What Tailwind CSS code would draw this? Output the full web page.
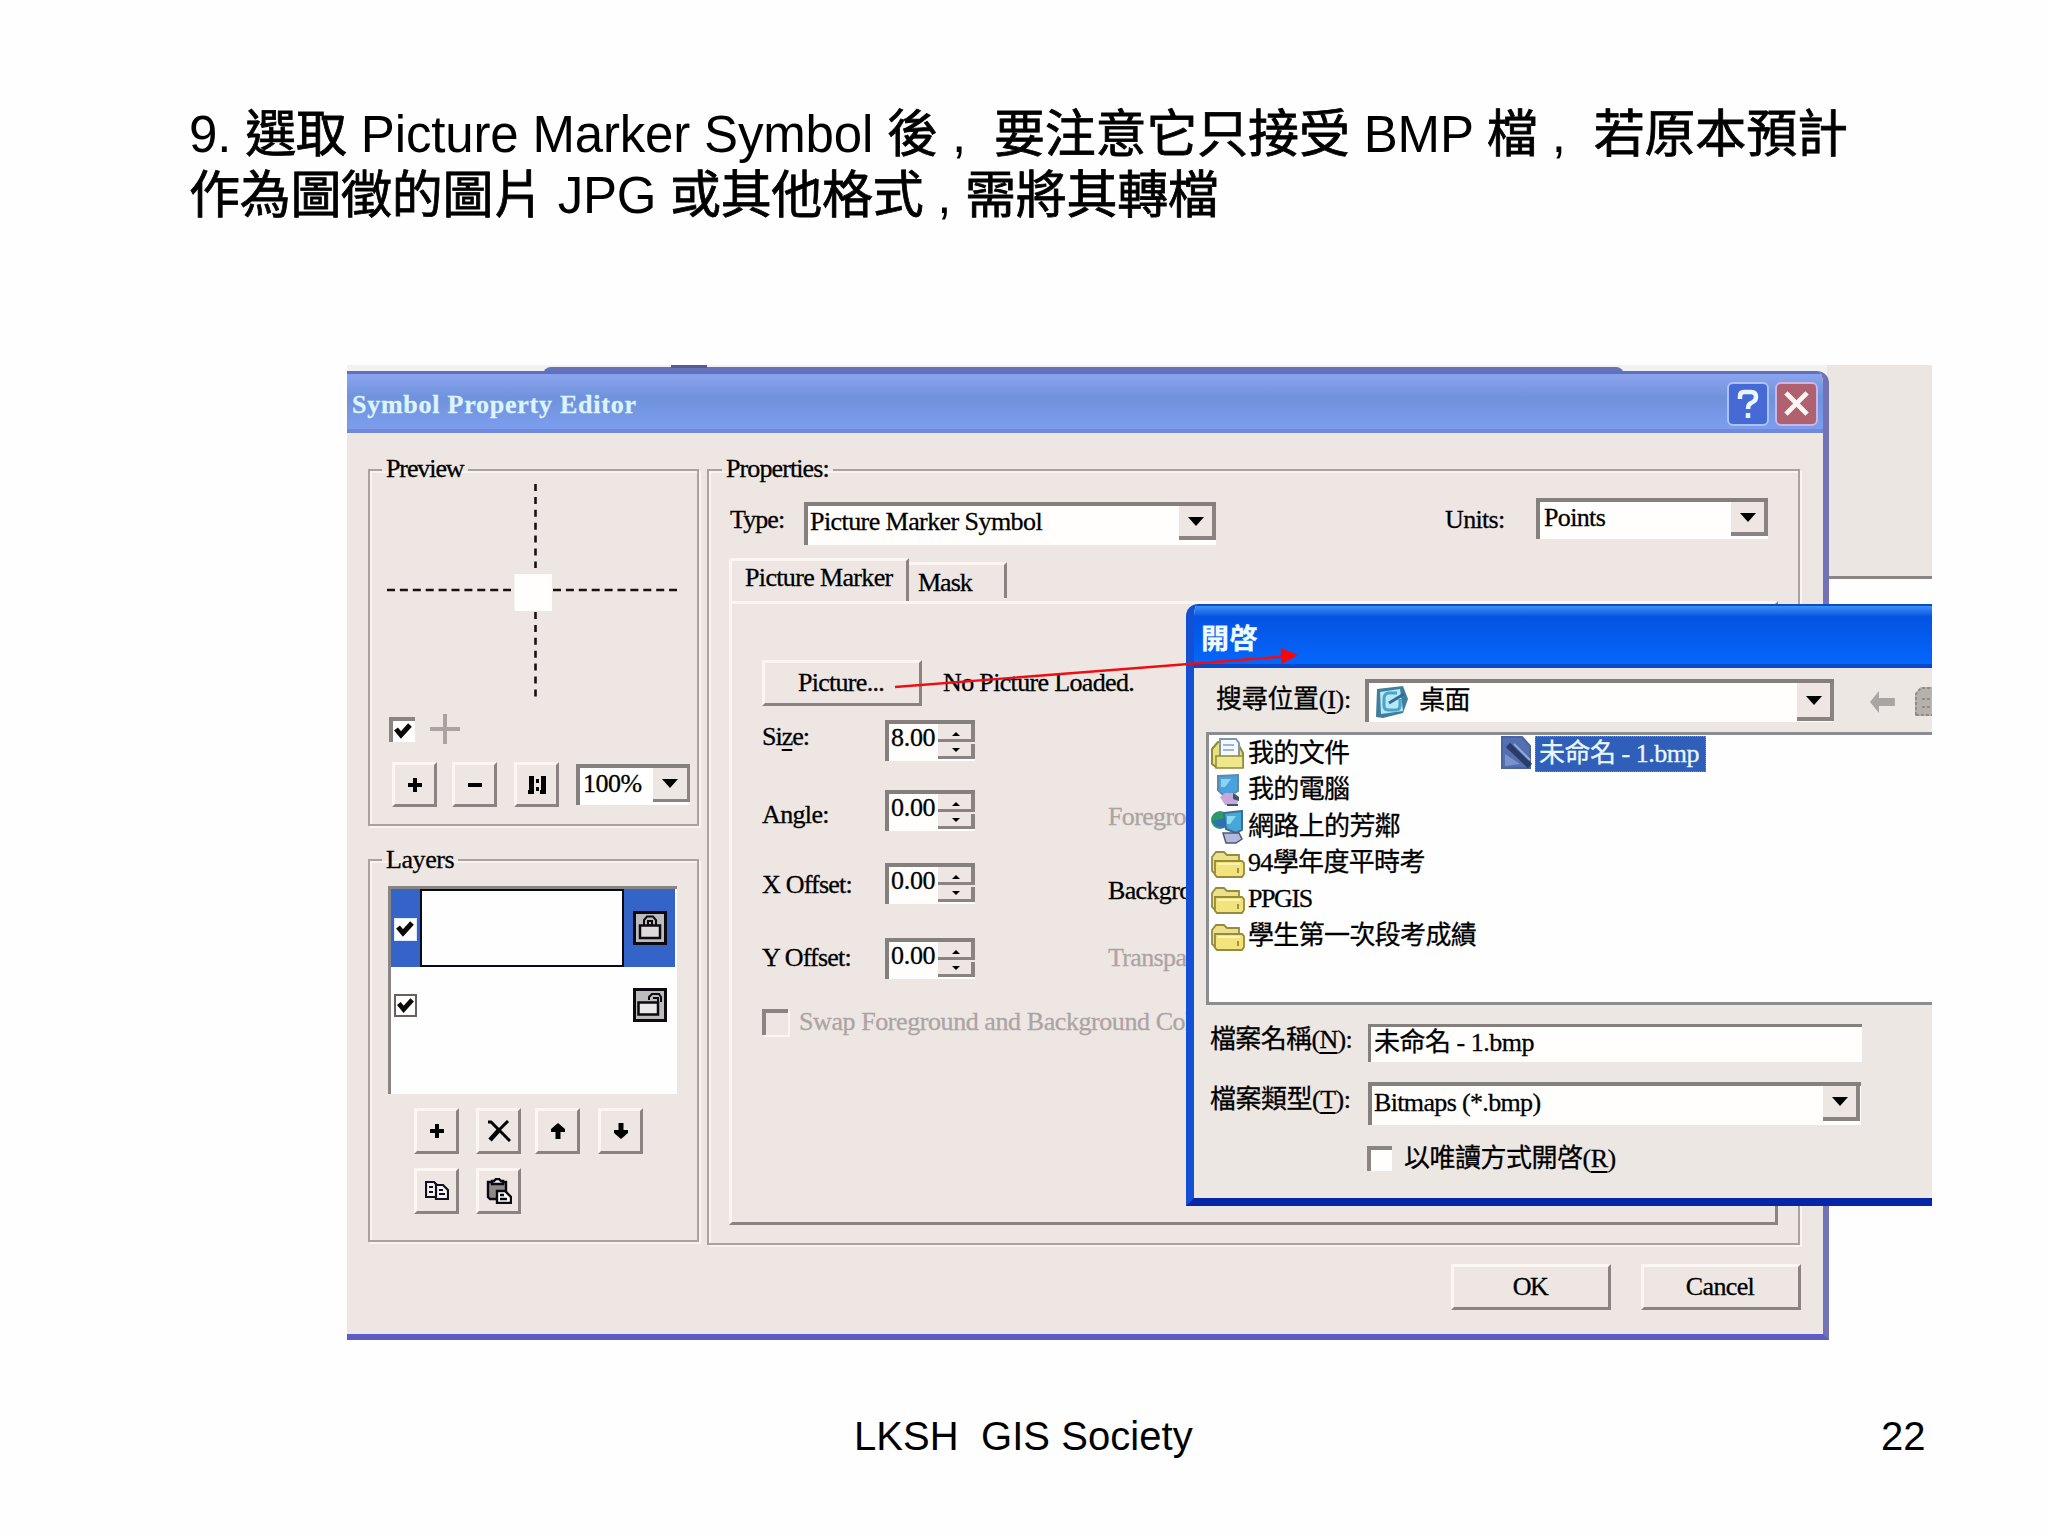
<!doctype html>
<html lang="zh-Hant">
<head>
    <meta charset="UTF-8" />
    <meta name="viewport" content="width=device-width, initial-scale=1.0" />
    <title>LKSH GIS Society - 22</title>
    <script src="https://cdn.jsdelivr.net/npm/@tailwindcss/browser@4"></script>
</head>
<body class="bg-[#fefefe] text-black">
<div class="w-[2048px] h-[1536px] flex flex-col overflow-hidden">

    <!-- Slide heading -->
    <header class="h-[365px] shrink-0 pt-[104px] pl-[189px] font-['Liberation_Sans','Noto_Sans_CJK_TC',sans-serif] text-[51px] leading-[61px] whitespace-nowrap">
        <p class="tracking-[-0.17px]">9. <span class="[-webkit-text-stroke:0.8px]">選取</span> Picture Marker Symbol <span class="[-webkit-text-stroke:0.8px]">後</span> ,&nbsp; <span class="[-webkit-text-stroke:0.8px]">要注意它只接受</span> BMP <span class="[-webkit-text-stroke:0.8px]">檔</span> ,&nbsp; <span class="[-webkit-text-stroke:0.8px]">若原本預計</span></p>
        <p class="tracking-[-0.3px]"><span class="[-webkit-text-stroke:0.8px]">作為圖徵的圖片</span> JPG <span class="[-webkit-text-stroke:0.8px]">或其他格式</span> , <span class="[-webkit-text-stroke:0.8px]">需將其轉檔</span></p>
    </header>

    <!-- Desktop area -->
    <main class="relative shrink-0 ml-[347px] w-[1585px] h-[975px] overflow-hidden font-['Liberation_Serif','Noto_Sans_CJK_TC',serif] text-[26px] leading-[30px] tracking-[-0.65px] whitespace-nowrap [-webkit-text-stroke:0.3px]">

        <!-- Windows behind -->
        <div class="absolute right-0 top-0 w-[110px] h-[214px] bg-[#ece6e2] border-b-[3px] border-[#8c8583]"></div>
        <div class="absolute left-0 top-0 w-[1480px] h-[20px] bg-[#f2f2f0]"></div>
        <div class="absolute left-[196px] top-[2px] w-[1081px] h-[12px] rounded-t-lg bg-[#6472b8]"></div>
        <div class="absolute left-[324px] top-0 w-[36px] h-[3px] bg-[#565a9c]"></div>

        <!-- Symbol Property Editor -->
        <section class="absolute left-0 top-[6px] w-[1482px] h-[969px] flex flex-col bg-[#ede6e3] rounded-tr-[12px] border-r-[6px] border-b-[6px] border-r-[#7272b8] border-b-[#5f5cc8] overflow-hidden">
            <div class="h-[62px] shrink-0 flex items-center pl-[5px] pr-[5px] border-t-[3px] border-[#6070c0] bg-linear-to-b from-[#88a2ec] from-5% via-[#7092dc] via-40% to-[#7d9ff0] shadow-[inset_0_-4px_0_#7487d8]">
                <h2 class="grow font-bold text-[#dcf4fb] tracking-[0.75px] pt-[3px]">Symbol Property Editor</h2>
                <div class="w-[42px] h-[44px] mr-[6px] rounded-md border-2 border-[#a9c4fa] bg-[#4669d6] flex items-center justify-center">
                    <svg class="w-[24px] h-[30px]" viewBox="0 0 24 30" fill="none" stroke="#e8f6ff" stroke-width="4.5"><path d="M4 10V7Q4 3 8 3H15Q20 3 20 8Q20 12 15 14Q12 15.500 12 20"/><path d="M12 24V29"/></svg>
                </div>
                <div class="w-[43px] h-[44px] rounded-md border-2 border-[#c9b6e6] bg-[#b0616f] flex items-center justify-center">
                    <svg class="w-[25px] h-[25px]" viewBox="0 0 26 26" stroke="#fff5f5" stroke-width="5"><path d="M2 2L24 24M24 2L2 24"/></svg>
                </div>
            </div>

            <div class="flex h-[812px] shrink-0 pl-[21px] pt-[23px]">
                <!-- Left column -->
                <div class="w-[331px] mr-[8px] flex flex-col">
                    <fieldset class="h-[370px] border-2 border-[#aaa29f] shadow-[2px_2px_0_#f9f4f0,inset_2px_2px_0_#f9f4f0]">
                        <legend class="ml-[12px] px-[4px] pt-px pb-[3px] leading-[24px] tracking-[-1.1px]">Preview</legend>
                        <svg class="block w-[327px] h-[224px]" viewBox="370 484 327 224" fill="none" stroke="#1c1012" stroke-width="2.600">
                            <path stroke-dasharray="7 5.900" d="M535.500 484V568M535.500 612V698"/>
                            <path stroke-dasharray="8 4.900" d="M387 590H511M553 590H677"/>
                            <path fill="#fffefd" stroke="none" d="M514.500 574H552V611H514.500z"/>
                        </svg>
                        <div class="flex items-center h-[42px] pl-[19px]">
                            <div class="w-[26px] h-[25px] mr-[15px] bg-white border-t-4 border-l-4 border-[#8a8583]">
                                <svg class="w-[20px] h-[20px]" viewBox="0 0 20 20" fill="none" stroke="#0c0808" stroke-width="5"><path d="M3 8L8 14L17 4"/></svg>
                            </div>
                            <svg class="w-[30px] h-[30px]" viewBox="0 0 30 30" stroke="#aaa3a2" stroke-width="4"><path d="M15 0V30M0 15H30"/></svg>
                        </div>
                        <div class="flex pt-[12px] pl-[22px]">
                            <button class="w-[45px] h-[45px] mr-[15px] flex items-center justify-center border-3 border-t-[#fcf6f3] border-l-[#fcf6f3] border-r-[#8a8381] border-b-[#8a8381]">
                                <svg class="w-[14px] h-[14px]" viewBox="0 0 14 14" stroke="#000" stroke-width="4"><path d="M7 0V14M0 7H14"/></svg>
                            </button>
                            <button class="w-[45px] h-[45px] mr-[17px] flex items-center justify-center border-3 border-t-[#fcf6f3] border-l-[#fcf6f3] border-r-[#8a8381] border-b-[#8a8381]">
                                <svg class="w-[14px] h-[14px]" viewBox="0 0 14 14" stroke="#000" stroke-width="4"><path d="M0 7H14"/></svg>
                            </button>
                            <button class="w-[45px] h-[45px] mr-[17px] flex items-center justify-center border-3 border-t-[#fcf6f3] border-l-[#fcf6f3] border-r-[#8a8381] border-b-[#8a8381]">
                                <svg class="w-[20px] h-[18px]" viewBox="0 0 20 18" fill="#000"><path d="M2 0H7V18H1V14H2zM9 3H12V7H9zM9 11H12V15H9zM14 0H19V18H13V14H14z"/></svg>
                            </button>
                            <div class="w-[114px] h-[41px] mt-[2px] flex bg-white border-t-4 border-l-4 border-[#85807d]">
                                <span class="w-[73px] pl-[3px] pt-px tracking-[-0.5px]">100%</span>
                                <div class="w-[37px] h-[34px] flex items-center justify-center bg-[#ede6e3] border-r-3 border-b-3 border-[#8a8381]"><svg class="w-[16px] h-[9px]" viewBox="0 0 16 9"><path d="M0 0H16L8 9z"/></svg></div>
                            </div>
                        </div>
                    </fieldset>

                    <fieldset class="h-[396px] mt-[20px] border-2 border-[#aaa29f] shadow-[2px_2px_0_#f9f4f0,inset_2px_2px_0_#f9f4f0]">
                        <legend class="ml-[12px] px-[4px] pt-[2px] pb-[2px] leading-[24px] tracking-[-0.4px]">Layers</legend>
                        <div class="w-[289px] h-[208px] ml-[18px] mt-[12px] bg-[#fffefe] border-t-3 border-l-3 border-t-[#8a8583] border-l-[#8a8583]">
                            <div class="flex items-center w-[284px] h-[78px] bg-[#3464c8]">
                                <div class="w-[23px] h-[23px] ml-[3px] mr-[3px] mt-[3px] bg-white border border-[#dce8ff]">
                                    <svg class="w-[20px] h-[20px]" viewBox="0 0 20 20" fill="none" stroke="#0c0808" stroke-width="5"><path d="M3 8L8 14L17 4"/></svg>
                                </div>
                                <div class="w-[204px] h-[78px] bg-[#fffefe] border-2 border-[#0a0a12]"></div>
                                <svg class="w-[34px] h-[34px] ml-[9px]" viewBox="0 0 34 34" fill="none" stroke="#0c0a0e" stroke-width="2.500"><path fill="#bdbbbd" stroke-width="3" d="M1.500 1.500H32.500V32.500H1.500z"/><path fill="#dddbdb" d="M7 14.500H27V27H7z"/><path d="M11 14V9L14 5.500H20L23 9V14M15 10H19V14H15z" stroke-width="2"/></svg>
                            </div>
                            <div class="flex items-center w-[284px] h-[76px]">
                                <div class="w-[23px] h-[23px] ml-[3px] bg-white border-2 border-[#68605f]">
                                    <svg class="w-[19px] h-[19px]" viewBox="0 0 20 20" fill="none" stroke="#0c0808" stroke-width="5"><path d="M3 8L8 14L17 4"/></svg>
                                </div>
                                <svg class="w-[34px] h-[34px] ml-[216px]" viewBox="0 0 34 34" fill="none" stroke="#0c0a0e" stroke-width="2.500"><path fill="#bdbbbd" stroke-width="3" d="M1.500 1.500H32.500V32.500H1.500z"/><path fill="#eae8e8" d="M5.500 14.500H25V26.500H5.500z"/><path d="M16 12V9L19 6H26L28 9V14M20 10H25V14" stroke-width="2"/></svg>
                            </div>
                        </div>
                        <div class="grid grid-cols-[62px_59px_63px_60px] grid-rows-[60px_46px] pl-[44px] pt-[14px]">
                            <button class="w-[45px] h-[46px] flex items-center justify-center border-3 border-t-[#fcf6f3] border-l-[#fcf6f3] border-r-[#8a8381] border-b-[#8a8381]">
                                <svg class="w-[14px] h-[14px]" viewBox="0 0 14 14" stroke="#000" stroke-width="4"><path d="M7 0V14M0 7H14"/></svg>
                            </button>
                            <button class="w-[45px] h-[46px] flex items-center justify-center border-3 border-t-[#fcf6f3] border-l-[#fcf6f3] border-r-[#8a8381] border-b-[#8a8381]">
                                <svg class="w-[24px] h-[22px]" viewBox="0 0 24 22" fill="none" stroke="#000"><path stroke-width="3" d="M1 2H4L20 18L23 21"/><path stroke-width="3" d="M21 1L12 10"/><path stroke-width="4.500" d="M12 10L3 20"/></svg>
                            </button>
                            <button class="w-[45px] h-[46px] flex items-center justify-center border-3 border-t-[#fcf6f3] border-l-[#fcf6f3] border-r-[#8a8381] border-b-[#8a8381]">
                                <svg class="w-[14px] h-[16px]" viewBox="0 0 14 16"><path d="M7 0L14 6V9H9.500V16H4.500V9H0V6z"/></svg>
                            </button>
                            <button class="w-[45px] h-[46px] flex items-center justify-center border-3 border-t-[#fcf6f3] border-l-[#fcf6f3] border-r-[#8a8381] border-b-[#8a8381]">
                                <svg class="w-[14px] h-[16px]" viewBox="0 0 14 16"><path d="M7 16L14 10V7H9.500V0H4.500V7H0V10z"/></svg>
                            </button>
                            <button class="w-[45px] h-[46px] flex items-center justify-center border-3 border-t-[#fcf6f3] border-l-[#fcf6f3] border-r-[#8a8381] border-b-[#8a8381]">
                                <svg class="w-[24px] h-[20px]" viewBox="0 0 24 20" fill="#f6f2fa" stroke="#12101c" stroke-width="2.200"><path d="M1 1H9L12 4V16H1z"/><path d="M4 6H8M4 11H8"/><path d="M11 4H18L23 9V18H11z"/><path d="M14 9H18M14 13H20"/></svg>
                            </button>
                            <button class="w-[45px] h-[46px] flex items-center justify-center border-3 border-t-[#fcf6f3] border-l-[#fcf6f3] border-r-[#8a8381] border-b-[#8a8381]">
                                <svg class="w-[26px] h-[26px]" viewBox="0 0 26 26" fill="#8f8a88" stroke="#0c0a10" stroke-width="2.400"><path d="M2 4H20V21H4L2 19z"/><path fill="#f4f0ee" d="M6 6V3H8L10 1H13L15 3H17V6z"/><path fill="#fff" d="M11 13H19L25 19V25H11z"/><path d="M14 17H18M14 21H21"/></svg>
                            </button>
                        </div>
                    </fieldset>
                </div>

                <!-- Right column -->
                <fieldset class="w-[1093px] h-[789px] border-2 border-[#aaa29f] shadow-[2px_2px_0_#f9f4f0,inset_2px_2px_0_#f9f4f0]">
                    <legend class="ml-[13px] px-[4px] pt-px pb-[3px] leading-[24px] tracking-[-0.9px]">Properties:</legend>
                    <div class="flex items-start h-[74px] pl-[21px]">
                        <label class="w-[74px] pt-[21px] tracking-[-0.9px]">Type:</label>
                        <div class="w-[412px] h-[43px] mt-[18px] mr-[229px] flex bg-[#fffefc] border-t-4 border-l-4 border-[#85807d]">
                            <span class="w-[371px] pl-[2px] pt-[1px] tracking-[-0.57px]">Picture Marker Symbol</span>
                            <div class="w-[37px] h-[34px] flex items-center justify-center bg-[#ede6e3] border-r-4 border-b-4 border-[#8a8381]"><svg class="w-[16px] h-[9px]" viewBox="0 0 16 9"><path d="M0 0H16L8 9z"/></svg></div>
                        </div>
                        <label class="w-[91px] pt-[21px]">Units:</label>
                        <div class="w-[232px] h-[41px] mt-[14px] flex bg-[#fffefc] border-t-4 border-l-4 border-[#85807d]">
                            <span class="w-[191px] pl-[4px] pt-px">Points</span>
                            <div class="w-[37px] h-[34px] flex items-center justify-center bg-[#ede6e3] border-r-4 border-b-4 border-[#8a8381]"><svg class="w-[16px] h-[9px]" viewBox="0 0 16 9"><path d="M0 0H16L8 9z"/></svg></div>
                        </div>
                    </div>

                    <!-- Tabs -->
                    <div class="flex h-[43px] pl-[20px]">
                        <div class="w-[180px] pl-[13px] pt-[2px] border-t-3 border-l-3 border-r-3 border-t-[#fcf6f3] border-l-[#fcf6f3] border-r-[#8a8381] rounded-tl">Picture Marker</div>
                        <div class="w-[98px] h-[36px] mt-[4px] pl-[9px] pt-[3px] border-t-3 border-r-3 border-t-[#fcf6f3] border-r-[#8a8381] tracking-[-1px]">Mask</div>
                    </div>
                    <div class="w-[1049px] h-[624px] ml-[20px] pl-[30px] pt-[56px] border-3 border-t-[#fcf6f3] border-l-[#fcf6f3] border-r-[#8a8381] border-b-[#8a8381]">
                        <div class="flex items-center h-[46px] mb-[14px]">
                            <button class="w-[160px] h-[46px] mr-[21px] pr-[2px] border-3 border-t-[#fcf6f3] border-l-[#fcf6f3] border-r-[#8a8381] border-b-[#8a8381] leading-[30px] tracking-[-0.7px]">Picture...</button>
                            <span>No Picture Loaded.</span>
                        </div>
                        <div class="flex items-start h-[70px]">
                            <label class="w-[123px] mt-[2px] tracking-[-1px]">Si<span class="underline underline-offset-4">z</span>e:</label>
                            <div class="w-[90px] h-[41px] flex bg-[#fffefc] border-t-4 border-l-4 border-[#85807d]">
                                <span class="w-[49px] pl-[2px] -mt-px tracking-[-0.3px]">8.00</span>
                                <svg class="w-[37px] h-[35px]" viewBox="0 0 37 35"><path fill="#ede6e3" d="M0 0H37V35H0z"/><path fill="#8a8381" d="M0 15H37V18H0zM0 32H37V35H0zM33 0H37V16H33zM33 20H37V35H33z"/><path d="M18 8L22 12H14zM18 28L22 24H14z"/></svg>
                            </div>
                        </div>
                        <div class="flex items-start h-[73px]">
                            <label class="w-[123px] mt-[10px]">Angle:</label>
                            <div class="w-[90px] h-[41px] mr-[133px] flex bg-[#fffefc] border-t-4 border-l-4 border-[#85807d]">
                                <span class="w-[49px] pl-[2px] -mt-px tracking-[-0.3px]">0.00</span>
                                <svg class="w-[37px] h-[35px]" viewBox="0 0 37 35"><path fill="#ede6e3" d="M0 0H37V35H0z"/><path fill="#8a8381" d="M0 15H37V18H0zM0 32H37V35H0zM33 0H37V16H33zM33 20H37V35H33z"/><path d="M18 8L22 12H14zM18 28L22 24H14z"/></svg>
                            </div>
                            <span class="mt-[12px] text-[#aca4a3]">Foreground Color:</span>
                        </div>
                        <div class="flex items-start h-[75px]">
                            <label class="w-[123px] mt-[7px] tracking-[-0.8px]">X Offset:</label>
                            <div class="w-[90px] h-[41px] mr-[133px] flex bg-[#fffefc] border-t-4 border-l-4 border-[#85807d]">
                                <span class="w-[49px] pl-[2px] -mt-px tracking-[-0.3px]">0.00</span>
                                <svg class="w-[37px] h-[35px]" viewBox="0 0 37 35"><path fill="#ede6e3" d="M0 0H37V35H0z"/><path fill="#8a8381" d="M0 15H37V18H0zM0 32H37V35H0zM33 0H37V16H33zM33 20H37V35H33z"/><path d="M18 8L22 12H14zM18 28L22 24H14z"/></svg>
                            </div>
                            <span class="mt-[13px]">Background Color:</span>
                        </div>
                        <div class="flex items-start h-[69px]">
                            <label class="w-[123px] mt-[5px] tracking-[-0.8px]">Y Offset:</label>
                            <div class="w-[90px] h-[41px] mr-[133px] flex bg-[#fffefc] border-t-4 border-l-4 border-[#85807d]">
                                <span class="w-[49px] pl-[2px] -mt-px tracking-[-0.3px]">0.00</span>
                                <svg class="w-[37px] h-[35px]" viewBox="0 0 37 35"><path fill="#ede6e3" d="M0 0H37V35H0z"/><path fill="#8a8381" d="M0 15H37V18H0zM0 32H37V35H0zM33 0H37V16H33zM33 20H37V35H33z"/><path d="M18 8L22 12H14zM18 28L22 24H14z"/></svg>
                            </div>
                            <span class="mt-[5px] text-[#aca4a3]">Transparent Color:</span>
                        </div>
                        <div class="flex items-center h-[30px] text-[#aca4a3]">
                            <div class="w-[26px] h-[26px] mr-[11px] border-t-4 border-l-4 border-[#8a8583] shadow-[2px_2px_0_#fbf6f3]"></div>
                            <span class="tracking-[-0.42px]">Swap Foreground and Background Colors</span>
                        </div>
                    </div>
                </fieldset>
            </div>

            <!-- Dialog buttons -->
            <div class="flex justify-end gap-[30px] pt-[19px] pr-[22px]">
                <button class="w-[160px] h-[46px] pr-[2px] border-3 border-t-[#fcf6f3] border-l-[#fcf6f3] border-r-[#8a8381] border-b-[#8a8381] tracking-[-1.5px]">OK</button>
                <button class="w-[160px] h-[46px] pr-[2px] border-3 border-t-[#fcf6f3] border-l-[#fcf6f3] border-r-[#8a8381] border-b-[#8a8381]">Cancel</button>
            </div>
        </section>

        <!-- Open file dialog -->
        <section class="absolute left-[839px] top-[239px] w-[746px] h-[602px] flex flex-col bg-[#ede7e3] rounded-tl-[12px] border-l-[8px] border-b-[8px] border-l-[#1450d4] border-b-[#0626a8] overflow-hidden">
            <div class="h-[64px] shrink-0 -ml-[8px] pl-[15px] pt-[21px] bg-linear-to-b from-[#3f8ff8] from-3% via-[#0553e2] via-20% to-[#0466fb] to-90% shadow-[inset_0_-4px_0_#0848cc,inset_0_2px_0_#0a4fc0]">
                <h2 class="font-bold text-[#f0fbff] text-[28px] tracking-[0.5px]">開啓</h2>
            </div>
            <div class="flex items-start h-[64px] shrink-0 pl-[22px] pt-[11px]">
                <label class="w-[150px] mt-[6px] tracking-[-0.3px]">搜尋位置(<span class="underline underline-offset-4">I</span>):</label>
                <div class="w-[469px] h-[43px] flex bg-[#fffefc] border-t-4 border-l-4 border-[#85807d]">
                    <svg class="w-[34px] h-[34px] ml-[6px] mt-[2px]" viewBox="0 0 34 34"><path fill="#3f7f9c" d="M2 4L28 1L33 14L28 28L8 33L1 32z"/><path fill="#b8e6f4" d="M5 7L25 4L28 26L6 29z"/><path fill="none" stroke="#4aa3c8" stroke-width="3" d="M22 8H13Q9 9 9 14V21Q9 25 14 25H21Q25 25 25 20V14"/><path stroke="#2e6d96" stroke-width="3" d="M14 18L29 9" /></svg>
                    <span class="w-[388px] pl-[10px] pt-[3px]">桌面</span>
                    <div class="w-[37px] h-[38px] flex items-center justify-center bg-[#ede6e3] border-r-4 border-b-4 border-[#8a8381]"><svg class="w-[16px] h-[9px]" viewBox="0 0 16 9"><path d="M0 0H16L8 9z"/></svg></div>
                </div>
                <svg class="w-[27px] h-[24px] ml-[36px] mt-[11px]" viewBox="0 0 27 24" fill="#a9a5a3"><path d="M0 12L9 1V8H25V16H9V23z"/></svg>
                <svg class="w-[17px] h-[30px] ml-[18px] mt-[8px]" viewBox="0 0 17 30"><path fill="#b5b1ad" d="M0 6L6 0H17V29H0z"/><path fill="none" stroke="#8f8c89" stroke-width="2" stroke-dasharray="3 2" d="M1 28V7L6 1H17M7 12H17M7 20H17M1 28H17"/></svg>
            </div>

            <!-- File list -->
            <div class="h-[273px] shrink-0 ml-[12px] pl-[2px] flex bg-[#fffefe] border-t-3 border-l-3 border-b-3 border-[#8b8d90]">
                <ul class="w-[289px] pt-px">
                    <li class="flex items-center h-[36.300px]"><svg class="w-[34px] h-[34px] mr-[3px]" viewBox="0 0 34 34"><path fill="#e8e07c" stroke="#8f8a34" stroke-width="2" d="M1 12L7 5H26L32 16V30H5L1 27z"/><path fill="#f4faff" stroke="#7f96b4" stroke-width="2" d="M9 18V2H25L28 6V20H9z"/><path stroke="#9fb6d0" stroke-width="2" d="M12 8H23M12 13H23"/><path fill="#efe78c" stroke="#8f8a34" stroke-width="1.500" d="M5 19H32V31H5z"/></svg>我的文件</li>
                    <li class="flex items-center h-[36.300px]"><svg class="w-[34px] h-[34px] mr-[3px]" viewBox="0 0 34 34"><path fill="#4aa2dc" stroke="#5f88ac" stroke-width="2" d="M7 3L27 2V18L20 22H12L7 17z"/><path fill="#8ed2f4" d="M10 6H20L14 14H10z"/><path fill="#c6a8dc" d="M9 24L14 20H24L28 25L26 32H14z"/><path fill="#3f5468" d="M22 20L28 24V28L22 26zM16 31H27V33H16z"/></svg>我的電腦</li>
                    <li class="flex items-center h-[36.300px]"><svg class="w-[34px] h-[34px] mr-[3px]" viewBox="0 0 34 34"><circle cx="9" cy="10" r="9" fill="#2c9a68"/><path fill="#2d70b8" d="M1 11Q7 20 16 17L14 8z"/><path fill="#46a8d8" stroke="#3f6d94" stroke-width="2" d="M13 3L31 1V20L25 23L15 19z"/><path fill="#8ed8f2" d="M16 6H25L19 14H16z"/><path fill="#b4bade" stroke="#4d5878" stroke-width="1.500" d="M12 23H28L31 29L25 33H15z"/></svg>網路上的芳鄰</li>
                    <li class="flex items-center h-[36.300px]"><svg class="w-[34px] h-[34px] mr-[3px]" viewBox="0 0 34 34" stroke="#968a3c" stroke-width="1.800"><path fill="#ece08a" d="M1 11L5 6H13L16 9H28V28H4L1 25z"/><path fill="#f3e37c" d="M4 15H31L33 17V28L31 31H6L4 29z"/><path stroke="#fff6b8" d="M7 18H29"/><path d="M27 22V27"/></svg>94學年度平時考</li>
                    <li class="flex items-center h-[36.300px]"><svg class="w-[34px] h-[34px] mr-[3px]" viewBox="0 0 34 34" stroke="#968a3c" stroke-width="1.800"><path fill="#ece08a" d="M1 11L5 6H13L16 9H28V28H4L1 25z"/><path fill="#f3e37c" d="M4 15H31L33 17V28L31 31H6L4 29z"/><path stroke="#fff6b8" d="M7 18H29"/><path d="M27 22V27"/></svg><span class="tracking-[-1.4px]">PPGIS</span></li>
                    <li class="flex items-center h-[36.300px]"><svg class="w-[34px] h-[34px] mr-[3px]" viewBox="0 0 34 34" stroke="#968a3c" stroke-width="1.800"><path fill="#ece08a" d="M1 11L5 6H13L16 9H28V28H4L1 25z"/><path fill="#f3e37c" d="M4 15H31L33 17V28L31 31H6L4 29z"/><path stroke="#fff6b8" d="M7 18H29"/><path d="M27 22V27"/></svg>學生第一次段考成績</li>
                </ul>
                <div class="flex h-[36px] pt-px">
                    <svg class="w-[34px] h-[34px] mr-px" viewBox="0 0 34 34"><path fill="#5470b0" stroke="#4a64a4" stroke-width="2" d="M2 1H22L30 10V32H2z"/><path fill="#7d92c8" d="M5 18L20 28L5 30z"/><path stroke="#2a3c68" stroke-width="6" d="M8 9L30 30"/><path stroke="#8ca8dc" stroke-width="2" d="M14 8L30 24"/></svg>
                    <span class="w-[171px] h-[36px] pl-[4px] leading-[35px] tracking-[-0.5px] bg-[#2f5fb8] text-[#eaf6ff] outline outline-dotted outline-[#6f8fd0] -outline-offset-1">未命名 - 1.bmp</span>
                </div>
            </div>

            <div class="flex items-start h-[57px] shrink-0 pl-[16px] pt-[19px]">
                <label class="w-[158px] mt-px">檔案名稱(<span class="underline underline-offset-4">N</span>):</label>
                <div class="w-[494px] h-[38px] pl-[3px] pt-px bg-[#fffefc] border-t-3 border-l-3 border-[#85807d] tracking-[-0.5px]">未命名 - 1.bmp</div>
            </div>
            <div class="flex items-start h-[60px] shrink-0 pl-[16px] pt-[20px]">
                <label class="w-[158px] mt-[3px] tracking-[-0.5px]">檔案類型(<span class="underline underline-offset-4">T</span>):</label>
                <div class="w-[493px] h-[43px] flex bg-[#fffefc] border-t-4 border-l-4 border-[#85807d]">
                    <span class="w-[451px] pl-[2px] pt-[2px]">Bitmaps (*.bmp)</span>
                    <div class="w-[37px] h-[35px] flex items-center justify-center bg-[#ede6e3] border-r-4 border-b-4 border-[#8a8381]"><svg class="w-[16px] h-[9px]" viewBox="0 0 16 9"><path d="M0 0H16L8 9z"/></svg></div>
                </div>
            </div>
            <div class="flex items-start pt-[22px] pl-[173px]">
                <div class="w-[25px] h-[25px] mt-[2px] mr-[12px] bg-[#fffefc] border-t-4 border-l-4 border-[#8a8583]"></div>
                <span class="tracking-[-0.5px]">以唯讀方式開啓(<span class="underline underline-offset-4">R</span>)</span>
            </div>
        </section>

        <!-- Pointer from the button to the dialog -->
        <svg class="absolute left-[540px] top-[280px] w-[420px] h-[50px]" viewBox="887 645 420 50">
            <path stroke="#f00d10" stroke-width="2.400" d="M895 687L1284 656.500"/>
            <path fill="#fa0505" d="M1298 655L1280.500 648L1281.700 664z"/>
        </svg>
    </main>

    <!-- Slide footer -->
    <footer class="flex pt-[73px] pl-[854px] font-['Liberation_Sans',sans-serif] text-[40px] leading-[46px]">
        <span class="w-[1027px] tracking-[0.05px]">LKSH&nbsp; GIS Society</span>
        <span>22</span>
    </footer>
</div>
</body>
</html>
